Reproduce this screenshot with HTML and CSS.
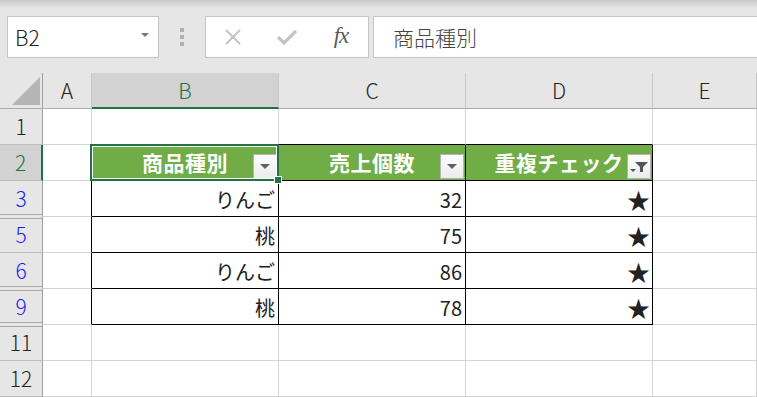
FILE: index.html
```html
<!DOCTYPE html>
<html lang="ja">

<head>
    <meta charset="UTF-8">
    <title>Book1 - Excel</title>
    <link rel="stylesheet" href="styles.css">
</head>

<body>
    <div class="ribbon-edge"></div>

    <div class="formula-bar">
        <div class="name-box">
            <span>B2</span>
            <span class="caret"></span>
        </div>
        <div class="grip"><i></i><i></i><i></i></div>
        <div class="fx-buttons">
            <span class="slot">
                <svg width="18" height="16" viewBox="0 0 18 16">
                    <path d="M2 1 L16 15 M16 1 L2 15" stroke="#c4c4c4" stroke-width="2" fill="none" />
                </svg>
            </span>
            <span class="slot">
                <svg width="20" height="16" viewBox="0 0 20 16">
                    <path d="M1 8 L7 14 L19 2" stroke="#c4c4c4" stroke-width="3.2" fill="none" />
                </svg>
            </span>
            <span class="slot fx">fx</span>
        </div>
        <div class="formula-input">商品種別</div>
    </div>

    <div class="sheet">
        <div class="row col-heads">
            <div class="cell corner"><span class="select-all"></span></div>
            <div class="cell">A</div>
            <div class="cell active-col">B</div>
            <div class="cell">C</div>
            <div class="cell">D</div>
            <div class="cell">E</div>
        </div>

        <div class="row">
            <div class="cell rh">1</div>
            <div class="cell"></div>
            <div class="cell tbl-top"></div>
            <div class="cell tbl-top"></div>
            <div class="cell tbl-top"></div>
            <div class="cell"></div>
        </div>

        <div class="row">
            <div class="cell rh active-row">2</div>
            <div class="cell tbl-left"></div>
            <div class="cell th selected">
                商品種別
                <span class="filter-btn"><span class="tri"></span></span>
            </div>
            <div class="cell th">
                売上個数
                <span class="filter-btn"><span class="tri"></span></span>
            </div>
            <div class="cell th">
                重複チェック
                <span class="filter-btn">
                    <svg width="20" height="14" viewBox="0 0 20 14">
                        <path d="M6 2 H19 L14 7 V12 H11 V7 Z" fill="#555" />
                        <path d="M1 9 H7 L4 12 Z" fill="#555" />
                    </svg>
                </span>
            </div>
            <div class="cell"></div>
        </div>

        <div class="row">
            <div class="cell rh filtered hid-after">3</div>
            <div class="cell tbl-left"></div>
            <div class="cell td">りんご</div>
            <div class="cell td">32</div>
            <div class="cell td star">★</div>
            <div class="cell"></div>
        </div>

        <div class="row">
            <div class="cell rh filtered hid-before">5</div>
            <div class="cell tbl-left"></div>
            <div class="cell td">桃</div>
            <div class="cell td">75</div>
            <div class="cell td star">★</div>
            <div class="cell"></div>
        </div>

        <div class="row">
            <div class="cell rh filtered hid-after">6</div>
            <div class="cell tbl-left"></div>
            <div class="cell td">りんご</div>
            <div class="cell td">86</div>
            <div class="cell td star">★</div>
            <div class="cell"></div>
        </div>

        <div class="row">
            <div class="cell rh filtered hid-before hid-after">9</div>
            <div class="cell tbl-left"></div>
            <div class="cell td">桃</div>
            <div class="cell td">78</div>
            <div class="cell td star">★</div>
            <div class="cell"></div>
        </div>

        <div class="row">
            <div class="cell rh hid-before">11</div>
            <div class="cell"></div>
            <div class="cell"></div>
            <div class="cell"></div>
            <div class="cell"></div>
            <div class="cell"></div>
        </div>

        <div class="row">
            <div class="cell rh">12</div>
            <div class="cell"></div>
            <div class="cell"></div>
            <div class="cell"></div>
            <div class="cell"></div>
            <div class="cell"></div>
        </div>
    </div>
</body>

</html>
```

FILE: styles.css
```css
:root {
    --chrome: #e6e6e6;
    --chrome-dark: #d2d2d2;
    --grid: #d4d4d4;
    --head-line: #ababab;
    --hidden-line: #a8a8a8;
    --excel-green: #217346;
    --table-green: #70ad47;
    --box-border: #c6c6c6;
}

body {
    margin: 0;
    width: 757px;
    height: 397px;
    overflow: hidden;
    background: var(--chrome);
    font-family: "Noto Sans CJK JP", sans-serif;
    color: #222;
}

.ribbon-edge {
    height: 8px;
    background: linear-gradient(to bottom, #c8c8c8, var(--chrome));
}

/* formula bar */

.formula-bar {
    display: flex;
    align-items: stretch;
    height: 42px;
    padding: 8px 0 15px 7px;
}

.name-box,
.fx-buttons,
.formula-input {
    background: #fff;
    border: 1px solid var(--box-border);
    box-sizing: border-box;
}

.name-box {
    width: 152px;
    display: flex;
    align-items: center;
    justify-content: space-between;
    padding: 0 9px 0 7px;
    font-size: 21px;
    font-weight: 300;
}

.caret {
    width: 0;
    height: 0;
    border-left: 4px solid transparent;
    border-right: 4px solid transparent;
    border-top: 4px solid #777;
    margin-bottom: 4px;
}

.grip {
    width: 46px;
    display: flex;
    flex-direction: column;
    align-items: center;
    justify-content: center;
    gap: 3px;
}

.grip i {
    width: 4px;
    height: 4px;
    background: #b0b0b0;
}

.fx-buttons {
    width: 164px;
    display: flex;
    margin-right: 4px;
}

.slot {
    flex: 1;
    display: flex;
    align-items: center;
    justify-content: center;
}

.fx {
    font-family: "Liberation Serif", serif;
    font-style: italic;
    font-size: 23px;
    color: #5a5a5a;
    padding-bottom: 3px;
    letter-spacing: -1px;
}

.formula-input {
    flex: 1;
    border-right: none;
    display: flex;
    align-items: center;
    padding-left: 19px;
    font-size: 21px;
    font-weight: 300;
    color: #444;
}

/* sheet */

.row {
    display: grid;
    grid-template-columns: 43px 49px 187px 187px 187px 1fr;
    grid-template-rows: 36px;
    height: 36px;
}

.cell {
    position: relative;
    box-sizing: border-box;
    border-right: 1px solid var(--grid);
    border-bottom: 1px solid var(--grid);
    background: #fff;
    display: flex;
    align-items: center;
    font-size: 20px;
    line-height: 1.3;
    min-width: 0;
    min-height: 0;
}

.col-heads .cell {
    background: var(--chrome);
    border-right-color: #c8c8c8;
    border-bottom-color: var(--head-line);
    justify-content: center;
    font-size: 21px;
    font-weight: 300;
    padding-top: 1px;
}

.col-heads .corner {
    justify-content: flex-end;
    align-items: flex-end;
    padding: 0 2px 3px 0;
    border-right-color: #9f9f9f;
}

.select-all {
    width: 28px;
    height: 28px;
    background: #b5b5b5;
    clip-path: polygon(100% 0, 100% 100%, 0 100%);
}

.col-heads .active-col {
    background: var(--chrome-dark);
    color: var(--excel-green);
    border-bottom: 2px solid var(--excel-green);
}

.rh {
    background: var(--chrome);
    border-right-color: #9f9f9f;
    border-bottom-color: #bdbdbd;
    justify-content: center;
    font-size: 21px;
    font-weight: 300;
}

.rh.active-row {
    background: var(--chrome-dark);
    color: var(--excel-green);
    border-right: 2px solid var(--excel-green);
}

.rh.filtered {
    color: #1a1aff;
}

/* hidden rows show as a doubled line in the row header */
.rh.hid-after {
    border-bottom-color: var(--chrome);
    background: linear-gradient(to top, transparent 1px, var(--hidden-line) 1px 2px, transparent 2px) var(--chrome);
}

.rh.hid-before {
    background: linear-gradient(to bottom, transparent 1px, var(--hidden-line) 1px 2px, transparent 2px) var(--chrome);
}

.rh.hid-before.hid-after {
    background:
        linear-gradient(to bottom, transparent 1px, var(--hidden-line) 1px 2px, transparent 2px),
        linear-gradient(to top, transparent 1px, var(--hidden-line) 1px 2px, transparent 2px) var(--chrome);
}

/* table */

.tbl-top {
    border-bottom-color: #000;
}

.tbl-left {
    border-right-color: #000;
}

.th {
    background: var(--table-green);
    color: #fff;
    font-weight: bold;
    font-size: 21px;
    justify-content: center;
    letter-spacing: 0.5px;
    border-right-color: #000;
    border-bottom-color: #000;
}

.td {
    justify-content: flex-end;
    padding: 2px 3px 0 0;
    border-right-color: #000;
    border-bottom-color: #000;
}

.td.star {
    font-size: 23px;
    padding-right: 2px;
}

.filter-btn {
    position: absolute;
    right: 1px;
    bottom: 1px;
    width: 24px;
    height: 25px;
    box-sizing: border-box;
    border: 1px solid #b4b4b4;
    background: linear-gradient(to bottom, #fdfdfd, #ececec);
    display: flex;
    align-items: center;
    justify-content: center;
}

.tri {
    width: 0;
    height: 0;
    border-left: 5px solid transparent;
    border-right: 5px solid transparent;
    border-top: 5px solid #606060;
}

.selected::before {
    content: "";
    position: absolute;
    top: -1px;
    left: -2px;
    right: -1px;
    bottom: -1px;
    border: 2px solid var(--excel-green);
    box-shadow: inset 0 0 0 1px #fff;
    z-index: 2;
}

.selected::after {
    content: "";
    position: absolute;
    right: -4px;
    bottom: -4px;
    width: 6px;
    height: 6px;
    background: var(--excel-green);
    border: 1px solid #fff;
    z-index: 3;
}
```
